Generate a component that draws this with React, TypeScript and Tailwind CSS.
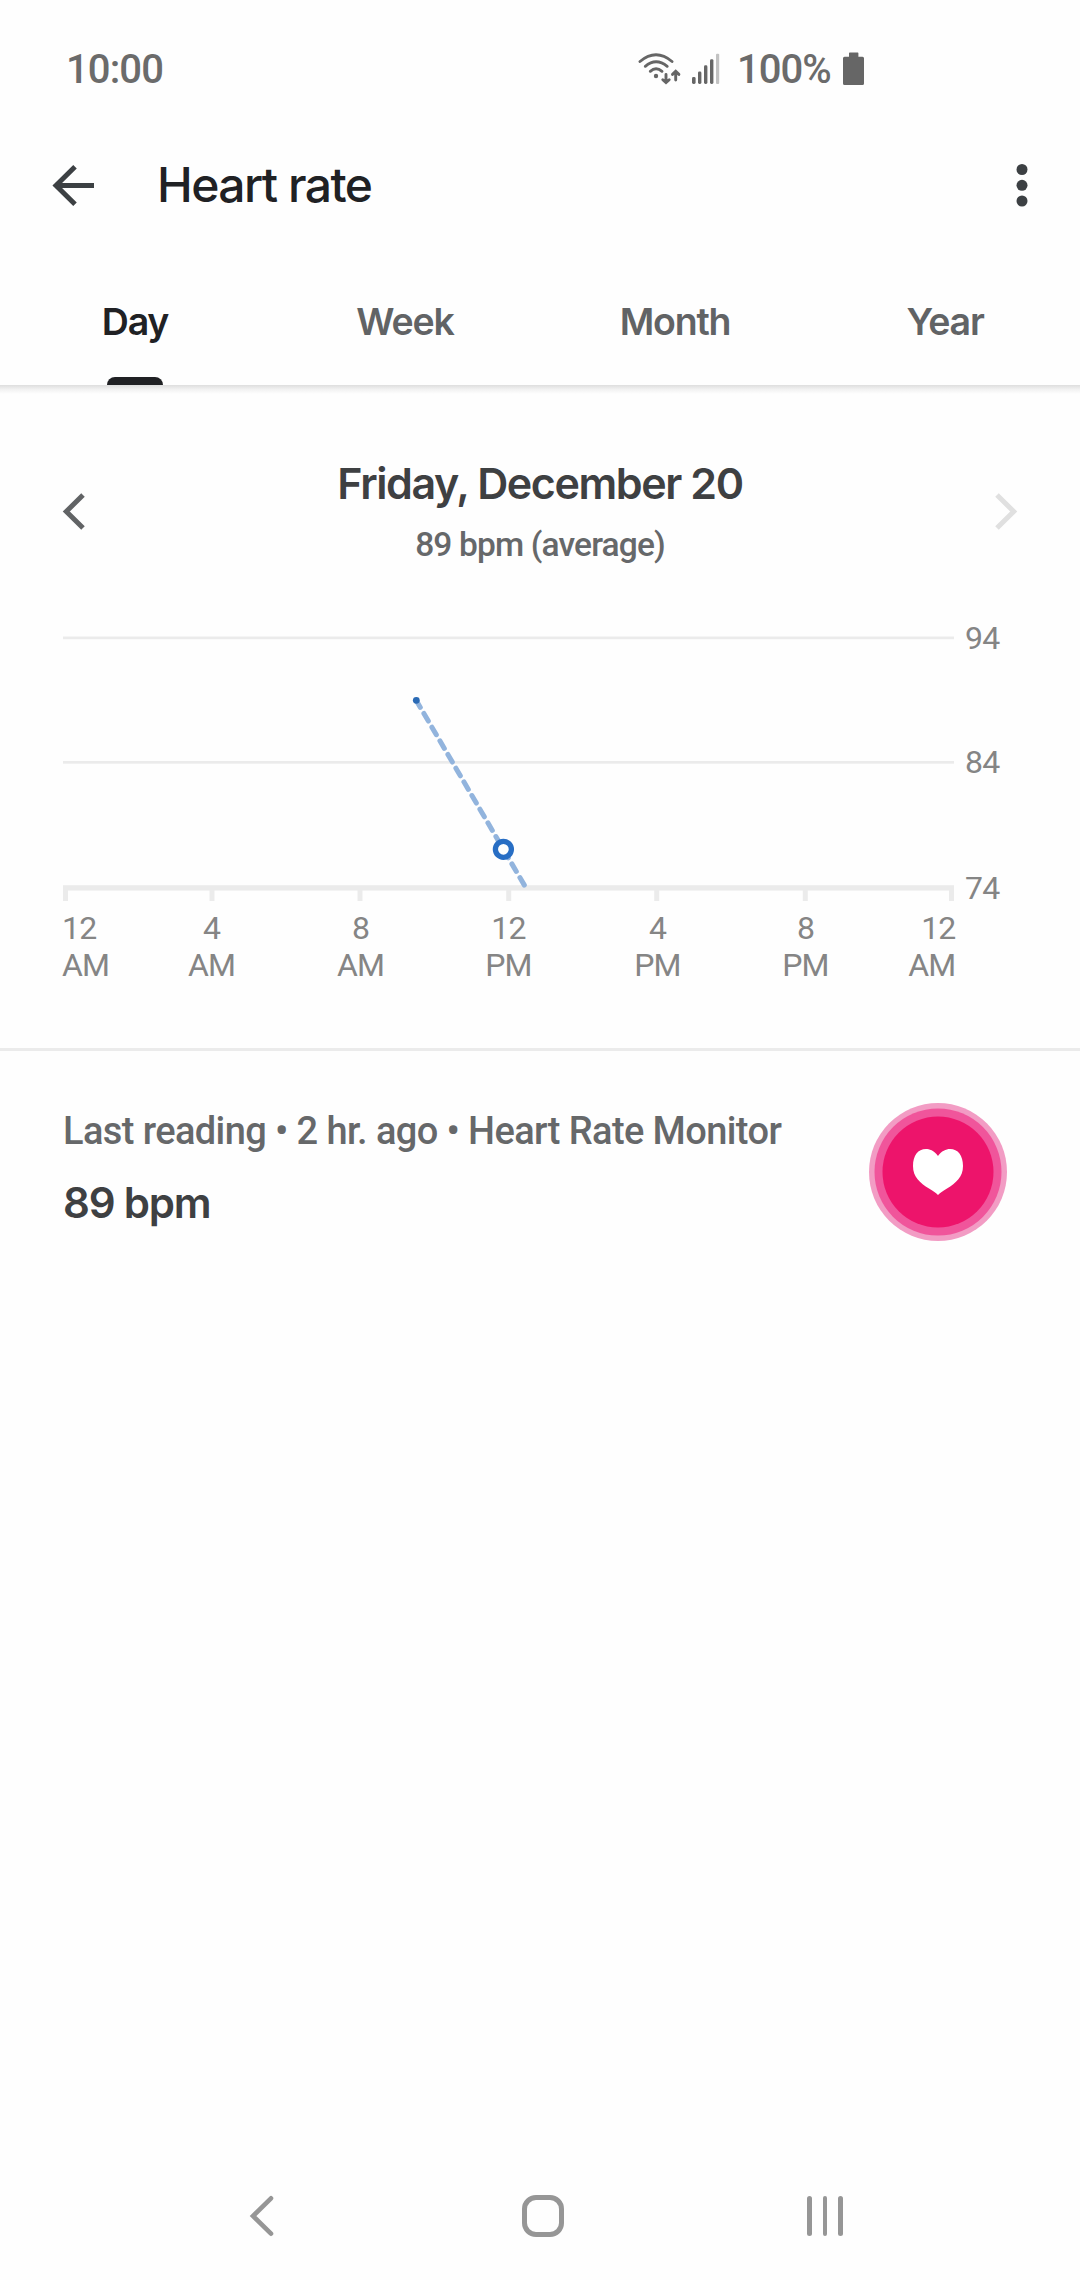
// Heart rate detail screen: day chart plus the latest reading.
import clsx from 'clsx';

const tabs = ['Day', 'Week', 'Month', 'Year'];

const gridLines = [
  { value: 94, y: 36.5, baseline: 48.5 },
  { value: 84, y: 161, baseline: 173 },
  { value: 74, y: 288, baseline: 299 },
];

const ticks = [
  { hour: '12', period: 'AM', x: 65.5, labelX: 62, anchor: 'start' },
  { hour: '4', period: 'AM', x: 212, labelX: 211.5, anchor: 'middle' },
  { hour: '8', period: 'AM', x: 360, labelX: 360.5, anchor: 'middle' },
  { hour: '12', period: 'PM', x: 508.7, labelX: 508.5, anchor: 'middle' },
  { hour: '4', period: 'PM', x: 656.7, labelX: 657.5, anchor: 'middle' },
  { hour: '8', period: 'PM', x: 805.3, labelX: 805.5, anchor: 'middle' },
  { hour: '12', period: 'AM', x: 951.5, labelX: 955.5, anchor: 'end' },
] as const;

function WifiIcon() {
  return (
    <svg viewBox="0 0 44 36" className="h-9 w-11" fill="none" stroke="#666" strokeWidth="2.9" strokeLinecap="round">
      <path d="M3 10.5Q19 -3 35 10.5" />
      <path d="M8.3 15.3Q19 6.2 30.2 15.3" />
      <path d="M13.3 20.3Q19 15.2 25 20.3" />
      <circle cx="19" cy="25" r="2.2" fill="#666" stroke="none" />
      <path d="M29 23.5V31M25.8 28.7L29 31.6L32.2 28.7" />
      <path d="M38.7 29V21.5M35.5 23.4L38.7 20.3L41.9 23.4" />
    </svg>
  );
}

function SignalIcon() {
  return (
    <svg viewBox="0 0 28 32" className="h-8 w-7" fill="#666">
      <rect x="0" y="24" width="3.6" height="7" rx="1.4" />
      <rect x="6" y="18.5" width="3.4" height="12.5" rx="1.4" />
      <rect x="12" y="12.3" width="3.4" height="18.7" rx="1.4" />
      <rect x="18" y="6.2" width="3.4" height="24.8" rx="1.4" />
      <rect x="24" y="0.8" width="3.2" height="30.2" rx="1" fill="#c2c2c2" />
    </svg>
  );
}

function StatusBar() {
  return (
    <div className="flex h-[138px] items-center pl-[66px] text-[40px] leading-none font-medium text-[#6b6b6b]">
      <span className="w-[571px] pt-0.5 tracking-[-0.9px]">10:00</span>
      <WifiIcon />
      <div className="ml-[11px]">
        <SignalIcon />
      </div>
      <span className="ml-[17px] w-[106px] pt-0.5 tracking-[-1px]">100%</span>
      <svg viewBox="0 0 22 34" className="h-[34px] w-[22px]" fill="#666">
        <path d="M6 4.8V1.2Q6 .5 6.7 .5H14.7Q15.4 .5 15.4 1.2V4.8H19.5Q21 4.8 21 6.3V31.5Q21 33 19.5 33H1.5Q0 33 0 31.5V6.3Q0 4.8 1.5 4.8Z" />
      </svg>
    </div>
  );
}

function AppBar() {
  return (
    <div className="flex h-[94px] items-center pl-[51px]">
      <svg viewBox="0 0 44 44" className="h-11 w-11" fill="none" stroke="#3c4043" strokeWidth="5">
        <path d="M43 22.5H5M24 3.7L5 22.5L24 41.3" />
      </svg>
      <h1 className="ml-[62px] flex-1 font-[Inter] text-[48px] leading-[58px] font-medium tracking-[-1.55px] text-[#202124]">
        Heart rate
      </h1>
      <svg viewBox="0 0 12 44" className="mr-[52px] h-11 w-3" fill="#3c4043">
        <circle cx="6" cy="6.5" r="5.5" />
        <circle cx="6" cy="22.3" r="5.5" />
        <circle cx="6" cy="38" r="5.5" />
      </svg>
    </div>
  );
}

function TabBar() {
  return (
    <>
      <div className="grid h-[153px] grid-cols-4">
        {tabs.map((tab, i) => (
          <div key={tab} className="flex flex-col items-center justify-between pt-[66px]">
            <span
              className={clsx(
                'font-[Inter] text-[37.5px] leading-[48px] font-semibold tracking-[-1.2px]',
                i === 0 ? 'text-[#202124]' : 'text-[#616365]',
              )}
            >
              {tab}
            </span>
            {i === 0 && <div className="h-2 w-14 rounded-t-lg bg-[#202124]" />}
          </div>
        ))}
      </div>
      <div className="h-[9px] bg-linear-to-b from-[#dedede] via-[#f2f2f2] to-[#fefefe]" />
    </>
  );
}

function DayHeader() {
  return (
    <div className="flex h-[206px] items-center justify-between px-[62px] pt-7">
      <svg viewBox="0 0 24 38" className="h-[38px] w-6" fill="none" stroke="#616365" strokeWidth="5">
        <path d="M21 3L4.3 19.5L21 36" />
      </svg>
      <div className="flex flex-col items-center pt-[5px]">
        <h2 className="font-[Inter] text-[43px] leading-[61px] font-semibold tracking-[-1.4px] text-[#3e4042]">
          Friday, December 20
        </h2>
        <p className="text-[33.5px] leading-[61px] font-medium tracking-[-0.85px] text-[#66686a]">89 bpm (average)</p>
      </div>
      <svg viewBox="0 0 24 38" className="h-[38px] w-6" fill="none" stroke="#e0e0e0" strokeWidth="5">
        <path d="M3 3L19.7 19.5L3 36" />
      </svg>
    </div>
  );
}

function Chart() {
  return (
    <svg viewBox="0 0 1080 448" className="block h-[448px] w-full text-[32px]" fill="#858585">
      {gridLines.map((line, i) => (
        <g key={line.value}>
          <rect
            x="63"
            y={i === 2 ? 285.2 : line.y}
            width="891"
            height={i === 2 ? 5.4 : 2.7}
            fill="#ebebeb"
          />
          <text x="965" y={line.baseline} letterSpacing="-0.8">
            {line.value}
          </text>
        </g>
      ))}
      {ticks.map((t) => (
        <g key={t.x}>
          <rect x={t.x - 2.5} y="290" width="5" height="11" fill="#ebebeb" />
          <text textAnchor={t.anchor} letterSpacing="-0.8">
            <tspan x={t.labelX} y="339">
              {t.hour}
            </tspan>
            <tspan x={t.labelX} y="376">
              {t.period}
            </tspan>
          </text>
        </g>
      ))}
      <path
        d="M416.3 100.5L526.3 288.5"
        stroke="#92b4dd"
        strokeWidth="5"
        strokeLinecap="round"
        strokeDasharray="8.8 7.04"
        strokeDashoffset="0.8"
      />
      <circle cx="416.3" cy="100.3" r="3.4" fill="#2a6ab5" />
      <circle cx="503.4" cy="249.3" r="8" fill="#fefefe" stroke="#286ec4" strokeWidth="5.3" />
    </svg>
  );
}

function HeartBadge() {
  return (
    <svg viewBox="0 0 138 138" className="h-[138px] w-[138px]">
      <circle cx="69" cy="69" r="69" fill="#f29cc4" />
      <circle cx="69" cy="69" r="63.5" fill="#f0559b" />
      <circle cx="69" cy="69" r="55.5" fill="#ed146b" />
      <path
        d="M69 53C65 47 60 46 57 46C49 46 44 52.500 44 63C44 74 51 80 60 85.500Q67 89.500 69 92Q71 89.500 78 85.500C87 80 94 74 94 63C94 52.500 89 46 81 46C77 46 72.500 48 69 53Z"
        fill="#fff"
      />
    </svg>
  );
}

function LastReading() {
  return (
    <div className="flex h-[248px] items-start justify-between border-t-[3px] border-[#ebebeb] pt-[52px] pr-[73px] pl-[63px]">
      <div>
        <p className="text-[38px] leading-[56px] font-medium tracking-[-0.6px] whitespace-nowrap text-[#66686a]">
          Last reading • 2 hr. ago • Heart Rate Monitor
        </p>
        <p className="mt-[14px] font-[Inter] text-[42px] leading-[60px] font-semibold tracking-[-1.2px] text-[#3e4042]">
          89 bpm
        </p>
      </div>
      <HeartBadge />
    </div>
  );
}

function NavBar() {
  return (
    <div className="mt-auto flex h-[128px] items-center pl-[249px]">
      <svg viewBox="0 0 26 42" className="h-[42px] w-[26px]" fill="none" stroke="#969696" strokeWidth="4.6" strokeLinecap="round">
        <path d="M22 3.300L4 21L22 38.700" />
      </svg>
      <div className="ml-[247px] h-[42px] w-[42px] rounded-[14px] border-5 border-[#969696]" />
      <div className="ml-[243px] flex gap-[11px]">
        <div className="h-10 w-[4.6px] rounded-full bg-[#969696]" />
        <div className="h-10 w-[4.6px] rounded-full bg-[#969696]" />
        <div className="h-10 w-[4.6px] rounded-full bg-[#969696]" />
      </div>
    </div>
  );
}

export default function App() {
  return (
    <div className="flex h-[2280px] w-[1080px] flex-col overflow-hidden bg-[#fefefe] font-[Roboto,sans-serif]">
      <StatusBar />
      <AppBar />
      <TabBar />
      <DayHeader />
      <Chart />
      <LastReading />
      <NavBar />
    </div>
  );
}
